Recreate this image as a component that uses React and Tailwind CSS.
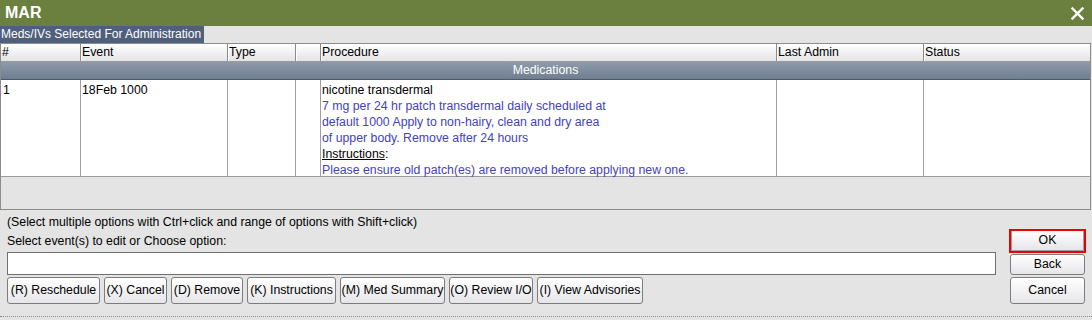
import React from "react";

const cols = [
  { label: "#", w: "w-[79px]", first: true },
  { label: "Event", w: "w-[147px]" },
  { label: "Type", w: "w-[68px]" },
  { label: "", w: "w-[25px]" },
  { label: "Procedure", w: "w-[456px]" },
  { label: "Last Admin", w: "w-[147px]" },
  { label: "Status", w: "flex-1" },
];

function Btn({ children, className = "" }) {
  return (
    <div
      className={
        "flex items-center justify-center h-[27px] rounded-[3px] border border-[#7d7d7d] bg-gradient-to-b from-[#ffffff] to-[#e6e6ea] text-[12.3px] text-black px-[2px] whitespace-nowrap " +
        className
      }
    >
      {children}
    </div>
  );
}

export default function App() {
  return (
    <div
      className="w-[1092px] h-[320px] bg-[#e4e4e4] text-[12.3px] text-black overflow-hidden"
      style={{ fontFamily: '"Liberation Sans", Arial, sans-serif' }}
    >
      {/* Title bar */}
      <div className="h-[26px] bg-[#6b7f3f] flex items-center justify-between pl-[5px] pr-[8px]">
        <span className="text-white font-bold text-[16px] leading-none">MAR</span>
        <svg width="13" height="13" viewBox="0 0 13 13">
          <path d="M1.5 1.5 L11.5 11.5 M11.5 1.5 L1.5 11.5" stroke="#ffffff" strokeWidth="2.4" strokeLinecap="square" />
        </svg>
      </div>
      {/* Strip */}
      <div className="h-[17px] flex">
        <div className="bg-[#505f7a] text-white min-w-[204px] leading-[17px] pl-[1px] pr-[2px] text-[12px] whitespace-nowrap">
          Meds/IVs Selected For Administration
        </div>
      </div>
      {/* Table */}
      <div className="w-[1091px] h-[167px] border border-[#8c8c8c] flex flex-col">
        <div className="h-[18px] flex border-b border-[#9a9a9a] bg-gradient-to-b from-[#ffffff] to-[#e4e4e4]">
          {cols.map((c, i) => (
            <div
              key={i}
              className={
                c.w +
                " h-full leading-[17px] pl-[1px] " +
                (c.first ? "" : "border-l border-[#8a8a8a] shadow-[inset_1px_0_0_#ffffff]")
              }
            >
              {c.label}
            </div>
          ))}
        </div>
        <div className="h-[18px] bg-gradient-to-b from-[#8d9bac] to-[#6f7e90] border-b border-[#4f5a68] text-white text-center leading-[17px]">
          Medications
        </div>
        <div className="h-[97px] flex bg-white border-b border-[#9a9a9a]">
          <div className="w-[79px] pl-[2px] pt-[2px] leading-[16px]">1</div>
          <div className="w-[147px] border-l border-[#a0a0a0] pl-[1px] pt-[2px] leading-[16px]">18Feb 1000</div>
          <div className="w-[68px] border-l border-[#a0a0a0]" />
          <div className="w-[25px] border-l border-[#a0a0a0]" />
          <div className="w-[456px] border-l border-[#a0a0a0] pl-[1px] pt-[2px] leading-[16px]">
            <div>nicotine transdermal</div>
            <div className="text-[#4343bf]">7 mg per 24 hr patch transdermal daily scheduled at</div>
            <div className="text-[#4343bf]">default 1000 Apply to non-hairy, clean and dry area</div>
            <div className="text-[#4343bf]">of upper body. Remove after 24 hours</div>
            <div>
              <span className="underline">Instructions</span>:
            </div>
            <div className="text-[#4343bf]">Please ensure old patch(es) are removed before applying new one.</div>
          </div>
          <div className="w-[147px] border-l border-[#a0a0a0]" />
          <div className="flex-1 border-l border-[#a0a0a0]" />
        </div>
        <div className="flex-1" />
      </div>
      {/* Bottom area */}
      <div className="flex h-[107px] border-b border-dotted border-[#8a8a8a]">
        <div className="flex flex-col pl-[7px] pt-[4px] w-[996px]">
          <div className="h-[16px] leading-[16px]">
            (Select multiple options with Ctrl+click and range of options with Shift+click)
          </div>
          <div className="h-[16px] leading-[16px] mt-[3px]">Select event(s) to edit or Choose option:</div>
          <div className="h-[23px] mt-[3px] bg-white border border-[#707070]" />
          <div className="flex gap-[4px] mt-[2px]">
            <Btn className="w-[93px]">(R) Reschedule</Btn>
            <Btn className="w-[63px]">(X) Cancel</Btn>
            <Btn className="w-[72px]">(D) Remove</Btn>
            <Btn className="w-[89px]">(K) Instructions</Btn>
            <Btn className="w-[105px]">(M) Med Summary</Btn>
            <Btn className="w-[84px]">(O) Review I/O</Btn>
            <Btn className="w-[106px]">(I) View Advisories</Btn>
          </div>
        </div>
        <div className="flex flex-col pl-[13px] pt-[19px]">
          <div className="w-[77px] h-[24px] border-2 border-[#ee0000] p-0">
            <div className="h-full border-x border-b border-[#a0a0a0] bg-gradient-to-b from-[#ffffff] to-[#e6e6ea] flex items-center justify-center">
              OK
            </div>
          </div>
          <div className="ml-[1px] mt-[1px]">
            <Btn className="w-[75px] !h-[21px]">Back</Btn>
          </div>
          <div className="ml-[1px] mt-[2px]">
            <Btn className="w-[75px]">Cancel</Btn>
          </div>
        </div>
      </div>
    </div>
  );
}
